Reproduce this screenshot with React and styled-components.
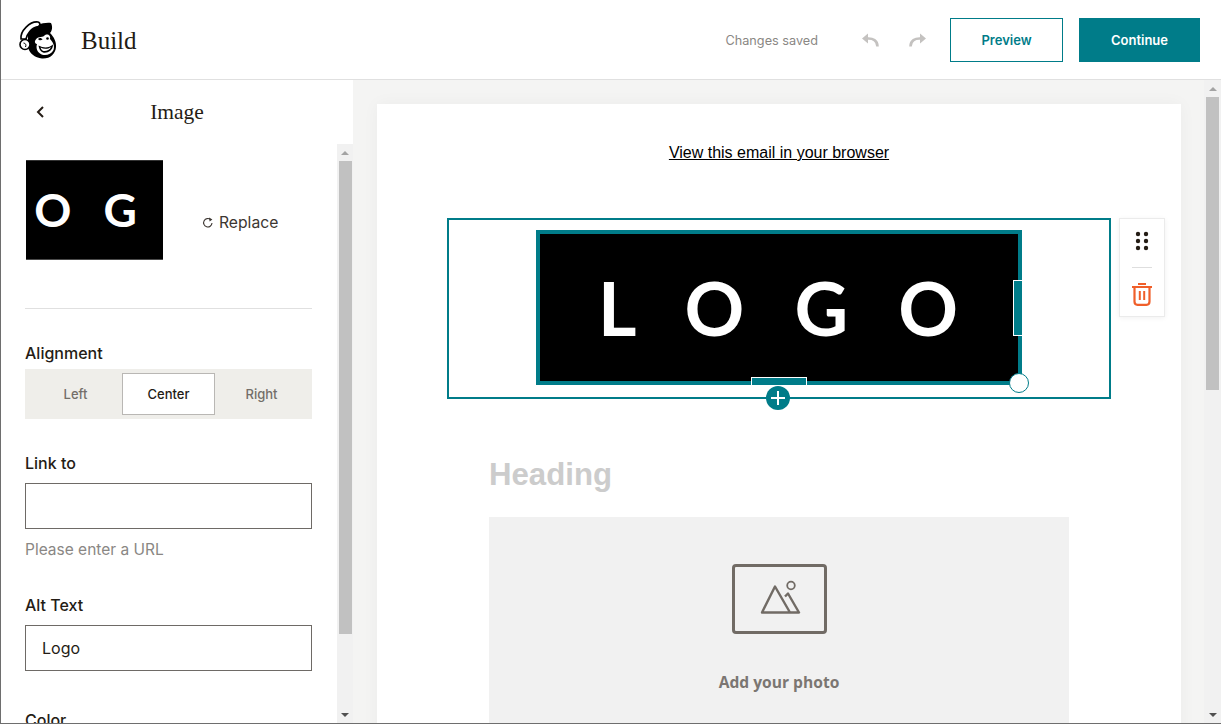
import React from "react"
import styled, { createGlobalStyle } from "styled-components"

const teal = "#007c89"
const ink = "#241c15"
const sans = `"Inter", "Liberation Sans", sans-serif`
const serif = `"Liberation Serif", serif`

const GlobalStyle = createGlobalStyle`
  html, body {
    margin: 0;
    padding: 0;
    overflow: hidden;
  }
  * {
    box-sizing: border-box;
  }
`

const Page = styled.div`
  display: flex;
  flex-direction: column;
  width: 1221px;
  height: 724px;
  overflow: hidden;
  background: #fff;
  border-left: 1px solid #6e6e6e;
  border-bottom: 1px solid #6e6e6e;
  font-family: ${sans};
  color: ${ink};
`

const Header = styled.header`
  display: flex;
  align-items: center;
  flex: none;
  height: 80px;
  padding: 0 21px 0 17px;
  border-bottom: 1px solid #e0e0e0;
`

const Logo = styled.svg`
  display: block;
  flex: none;
  margin-right: 23px;
`

const PageTitle = styled.h1`
  margin: 0;
  padding-top: 2px;
  font-family: ${serif};
  font-size: 25px;
  font-weight: 400;
  line-height: 30px;
`

const HeaderActions = styled.div`
  display: flex;
  align-items: center;
  margin-left: auto;
`

const SavedNote = styled.span`
  margin-right: 44px;
  padding-top: 2px;
  font-size: 12.7px;
  color: #8a8784;
`

const HistoryIcon = styled.svg`
  display: block;
  margin-right: ${({ $gap }) => $gap}px;
`

const HeaderButton = styled.button`
  display: flex;
  align-items: center;
  justify-content: center;
  width: ${({ $primary }) => ($primary ? 121 : 113)}px;
  height: 44px;
  margin-left: ${({ $primary }) => ($primary ? 16 : 0)}px;
  padding: 0;
  border: 1px solid ${teal};
  border-radius: 0;
  background: ${({ $primary }) => ($primary ? teal : "#fff")};
  color: ${({ $primary }) => ($primary ? "#fff" : teal)};
  font-family: ${sans};
  font-size: 13px;
  font-weight: 600;
`

const Body = styled.div`
  display: flex;
  flex: 1;
  min-height: 0;
`

const Sidebar = styled.aside`
  display: flex;
  flex-direction: column;
  flex: none;
  width: 352px;
  background: #fff;
`

const SidebarTitle = styled.div`
  position: relative;
  display: flex;
  align-items: center;
  justify-content: center;
  flex: none;
  height: 64px;
  font-family: ${serif};
  font-size: 21.5px;
  line-height: 26px;
  padding-bottom: 1px;
`

const BackIcon = styled.svg`
  position: absolute;
  left: 33px;
  top: 24px;
`

const SidebarPanel = styled.div`
  display: flex;
  flex: 1;
  min-height: 0;
`

const SidebarContent = styled.div`
  flex: 1;
  overflow: hidden;
  padding: 16px 25px 0 24px;
`

const ImageRow = styled.div`
  display: flex;
  align-items: flex-start;
  height: 149px;
  border-bottom: 1px solid #e0e0e0;
`

const Thumb = styled.div`
  display: flex;
  align-items: center;
  justify-content: center;
  gap: 32px;
  flex: none;
  width: 137px;
  height: 100px;
  margin-left: 1px;
  padding-right: 18px;
  background: #000;
  border-top: 1px solid #333;
  border-bottom: 1px solid #4a4a4a;
  color: #fff;
  font-family: "Lato", sans-serif;
  font-size: 46px;
  font-weight: 700;
  line-height: 1;
`

const ReplaceLink = styled.div`
  display: flex;
  align-items: center;
  gap: 5px;
  margin: 53px 0 0 39px;
  font-size: 15.7px;
  font-weight: 400;
  line-height: 20px;
  color: #3c3631;
`

const FieldLabel = styled.div`
  margin-top: ${({ $top }) => $top}px;
  font-size: 16px;
  font-weight: 500;
  line-height: 20px;
`

const Segments = styled.div`
  display: flex;
  align-items: center;
  height: 50px;
  margin-top: 6px;
  padding: 0 0 0 4px;
  background: #efeeea;
`

const Segment = styled.div`
  display: flex;
  align-items: center;
  justify-content: center;
  width: ${({ $width }) => $width}px;
  height: 42px;
  font-size: 13px;
  font-weight: 500;
  background: ${({ $active }) => ($active ? "#fff" : "transparent")};
  border: 1px solid ${({ $active }) => ($active ? "#b9b7b4" : "transparent")};
  color: ${({ $active }) => ($active ? ink : "#736e69")};
`

const TextBox = styled.div`
  display: flex;
  align-items: center;
  height: 46px;
  margin-top: 10px;
  padding: 0 16px;
  border: 1px solid #6e6a66;
  font-size: 16px;
`

const Hint = styled.div`
  margin-top: 11px;
  font-size: 15.5px;
  line-height: 20px;
  color: #8a8784;
`

const Scrollbar = styled.div`
  display: flex;
  flex-direction: column;
  align-items: center;
  flex: none;
  width: ${({ $width }) => $width}px;
  background: #f1f1f1;
`

const ScrollArrow = styled.div`
  display: flex;
  align-items: center;
  justify-content: center;
  flex: none;
  height: 17px;
  width: 100%;
  &::before {
    content: "";
    border-left: 4px solid transparent;
    border-right: 4px solid transparent;
    ${({ $down, $dim }) =>
      $down
        ? `border-top: 4px solid ${$dim ? "#a3a3a3" : "#505050"};`
        : `border-bottom: 4px solid ${$dim ? "#a3a3a3" : "#505050"};`}
  }
`

const ScrollThumb = styled.div`
  flex: none;
  width: 13px;
  height: ${({ $height }) => $height}px;
  background: #c1c1c1;
`

const ScrollGap = styled.div`
  flex: 1;
`

const Main = styled.main`
  display: flex;
  flex: 1;
  min-width: 0;
  background: #f4f4f3;
`

const CanvasArea = styled.div`
  flex: 1;
  overflow: hidden;
  padding: 24px 23px 0 24px;
`

const Canvas = styled.div`
  height: 700px;
  padding-top: 39px;
  background: #fff;
  box-shadow: 0 0 16px rgba(0, 0, 0, 0.04);
`

const BrowserLink = styled.a`
  display: block;
  font-family: "Liberation Sans", Arial, sans-serif;
  font-size: 16px;
  line-height: 20px;
  text-align: center;
  text-decoration: underline;
  color: #000;
`

const LogoBlock = styled.div`
  position: relative;
  display: flex;
  justify-content: center;
  width: 664px;
  height: 181px;
  margin: 55px 0 0 70px;
  padding-top: 10px;
  border: 2px solid ${teal};
`

const LogoImage = styled.div`
  position: relative;
  display: flex;
  align-items: center;
  justify-content: center;
  width: 486px;
  height: 155px;
  padding-left: 48px;
  background: #000;
  border: 4px solid ${teal};
  color: #fff;
  font-family: "Lato", sans-serif;
  font-size: 74px;
  font-weight: 700;
  letter-spacing: 50px;
  line-height: 1;
`

const SideHandle = styled.div`
  position: absolute;
  right: -4px;
  top: 46px;
  width: 9px;
  height: 56px;
  background: ${teal};
  border: 1px solid #fff;
  border-right: 0;
`

const BottomHandle = styled.div`
  position: absolute;
  left: 211px;
  bottom: -4px;
  width: 56px;
  height: 8px;
  background: ${teal};
  border: 1px solid #fff;
  border-bottom: 0;
`

const CornerHandle = styled.div`
  position: absolute;
  right: -11px;
  bottom: -12px;
  width: 20px;
  height: 20px;
  background: #fff;
  border: 1px solid ${teal};
  border-radius: 50%;
`

const AddButton = styled.div`
  position: absolute;
  left: 317px;
  bottom: -13px;
  display: flex;
  width: 24px;
  height: 24px;
  border-radius: 50%;
  background: ${teal};
`

const BlockTools = styled.div`
  position: absolute;
  left: 670px;
  top: -2px;
  display: flex;
  flex-direction: column;
  align-items: center;
  width: 46px;
  height: 99px;
  padding-top: 12px;
  background: #fff;
  border: 1px solid #ebebeb;
  box-shadow: 0 1px 5px rgba(0, 0, 0, 0.06);
`

const ToolDivider = styled.div`
  flex: none;
  width: 20px;
  height: 1px;
  margin: 16px 0 15px;
  background: #dedede;
`

const Heading = styled.h2`
  margin: 57px 0 0 112px;
  font-family: "Liberation Sans", Arial, sans-serif;
  font-size: 31.2px;
  font-weight: 700;
  line-height: 38px;
  color: #cccccc;
`

const PhotoSlot = styled.div`
  display: flex;
  flex-direction: column;
  align-items: center;
  width: 580px;
  height: 300px;
  margin: 23px 0 0 112px;
  padding-top: 47px;
  background: #f1f1f1;
`

const PhotoCaption = styled.div`
  margin-top: 37px;
  font-family: "Open Sans", sans-serif;
  font-size: 15.6px;
  font-weight: 700;
  line-height: 22px;
  color: #7b7672;
`

const PhotoGlyph = styled.svg`
  display: block;
  margin-left: 1px;
`

const FreddieLogo = () => (
  <Logo width="40" height="40" viewBox="18 19 40 40">
    <path
      d="M28 30C34 24 44 21 51 22C53 26 52 30 50 32C54 36 56.5 41 56 46C55.5 53 50 58 42 57.5C35 57 29 52 28 46Z"
      fill="#000"
    />
    <path
      d="M21 38C20 30 30 20 38 21C41 22 40 25 38 25.5C31 27 27 33 26 38Z"
      fill="#fff"
      stroke="#000"
      strokeWidth="1.6"
    />
    <circle cx="25" cy="43.5" r="5" fill="#fff" stroke="#000" strokeWidth="1.6" />
    <path d="M23.5 42C25.5 42 26.5 44 25.5 46" fill="none" stroke="#000" strokeWidth="1" />
    <path
      d="M35 40C37 35 42 36.5 44 35C47 32 51 34 50 38C53 41 55 45 53.5 49C51 54 44 55.5 40 52.5C36.5 50 36 46 37 43C35.5 43 34.5 41.5 35 40Z"
      fill="#fff"
    />
    <path d="M38.5 44.5C44 47.5 49 47 53 43.5C53 50 47 52.5 43 51.5C40.5 50.5 39 48 38.5 44.5Z" fill="#000" />
    <path d="M40.5 46.5C44 48.5 48 48.3 51 46C50 49 46 50.5 43.5 50C42 49.5 41 48 40.5 46.5Z" fill="#fff" />
    <path d="M38 38C39.5 36.5 41.5 37 42.5 38.5C41 39.8 39 39.5 38 38Z" fill="#000" />
    <circle cx="47.5" cy="37.5" r="1.3" fill="#000" />
  </Logo>
)

const UndoIcon = ({ flip, gap }) => (
  <HistoryIcon $gap={gap} width="17" height="14" viewBox="0 0 17 14">
    <g transform={flip ? "matrix(-1 0 0 1 17 0)" : undefined}>
      <path d="M0 5.5L6 0.5V10.5Z" fill="#c4c2c0" />
      <path d="M5 5.5C11 5 15.5 7.5 15.5 13.5" fill="none" stroke="#c4c2c0" strokeWidth="2.6" />
    </g>
  </HistoryIcon>
)

const BackChevron = () => (
  <BackIcon width="12" height="16" viewBox="0 0 12 16">
    <path d="M9 3L4 8L9 13" fill="none" stroke={ink} strokeWidth="2" />
  </BackIcon>
)

const RefreshIcon = () => (
  <svg width="12" height="12" viewBox="0 0 12 12">
    <path d="M8.6 2.6A4.2 4.2 0 1 0 10 6" fill="none" stroke="#3c3631" strokeWidth="1.1" />
    <path d="M7 0.6L10.4 2.4L7.6 4.6Z" fill="#3c3631" />
  </svg>
)

const GripIcon = () => (
  <svg width="14" height="20" viewBox="0 0 14 20" style={{ display: "block", flex: "none" }}>
    {[3, 10, 17].map((y) =>
      [3, 11].map((x) => <circle key={`${x}-${y}`} cx={x} cy={y} r="2.2" fill={ink} />)
    )}
  </svg>
)

const TrashIcon = () => (
  <svg width="20" height="23" viewBox="0 0 20 23" style={{ display: "block", flex: "none" }}>
    <path d="M6 1H14" stroke="#f05f2a" strokeWidth="2" />
    <path d="M0 4H20" stroke="#f05f2a" strokeWidth="2" />
    <path
      d="M2.5 4V18.5Q2.5 21.8 5.5 21.8H14.5Q17.5 21.8 17.5 18.5V4"
      fill="none"
      stroke="#f05f2a"
      strokeWidth="2.2"
    />
    <path d="M7.8 8V17M12.2 8V17" stroke="#f05f2a" strokeWidth="2" />
  </svg>
)

const PhotoIcon = () => (
  <PhotoGlyph width="95" height="70" viewBox="732 564.5 95 70">
    <rect x="733.5" y="566" width="92" height="67" rx="2.5" fill="none" stroke="#716b65" strokeWidth="3" />
    <path
      d="M762 613L775 587L790 613ZM785 597L788 594L799 613H790"
      fill="none"
      stroke="#716b65"
      strokeWidth="2.4"
      strokeLinejoin="round"
    />
    <circle cx="791" cy="586" r="3.8" fill="none" stroke="#716b65" strokeWidth="1.8" />
  </PhotoGlyph>
)

const PlusIcon = () => (
  <svg width="24" height="24" viewBox="0 0 24 24">
    <path d="M12 5V19M5 12H19" stroke="#fff" strokeWidth="2" />
  </svg>
)

const ScrollColumn = ({ width, thumb }) => (
  <Scrollbar $width={width}>
    <ScrollArrow $dim />
    <ScrollThumb $height={thumb} />
    <ScrollGap />
    <ScrollArrow $down />
  </Scrollbar>
)

const App = () => (
  <>
    <GlobalStyle />
    <Page>
      <Header>
        <FreddieLogo />
        <PageTitle>Build</PageTitle>
        <HeaderActions>
          <SavedNote>Changes saved</SavedNote>
          <UndoIcon gap={30} />
          <UndoIcon flip gap={24} />
          <HeaderButton>Preview</HeaderButton>
          <HeaderButton $primary>Continue</HeaderButton>
        </HeaderActions>
      </Header>
      <Body>
        <Sidebar>
          <SidebarTitle>
            <BackChevron />
            Image
          </SidebarTitle>
          <SidebarPanel>
            <SidebarContent>
              <ImageRow>
                <Thumb>
                  <span>O</span>
                  <span>G</span>
                </Thumb>
                <ReplaceLink>
                  <RefreshIcon />
                  Replace
                </ReplaceLink>
              </ImageRow>
              <FieldLabel $top={34}>Alignment</FieldLabel>
              <Segments>
                <Segment $width={93}>Left</Segment>
                <Segment $width={93} $active>
                  Center
                </Segment>
                <Segment $width={93}>Right</Segment>
              </Segments>
              <FieldLabel $top={34}>Link to</FieldLabel>
              <TextBox />
              <Hint>Please enter a URL</Hint>
              <FieldLabel $top={35}>Alt Text</FieldLabel>
              <TextBox>Logo</TextBox>
              <FieldLabel $top={39}>Color</FieldLabel>
            </SidebarContent>
            <ScrollColumn width={16} thumb={473} />
          </SidebarPanel>
        </Sidebar>
        <Main>
          <CanvasArea>
            <Canvas>
              <BrowserLink>View this email in your browser</BrowserLink>
              <LogoBlock>
                <LogoImage>
                  LOGO
                  <SideHandle />
                  <BottomHandle />
                  <CornerHandle />
                </LogoImage>
                <AddButton>
                  <PlusIcon />
                </AddButton>
                <BlockTools>
                  <GripIcon />
                  <ToolDivider />
                  <TrashIcon />
                </BlockTools>
              </LogoBlock>
              <Heading>Heading</Heading>
              <PhotoSlot>
                <PhotoIcon />
                <PhotoCaption>Add your photo</PhotoCaption>
              </PhotoSlot>
            </Canvas>
          </CanvasArea>
          <ScrollColumn width={17} thumb={293} />
        </Main>
      </Body>
    </Page>
  </>
)

export default App
